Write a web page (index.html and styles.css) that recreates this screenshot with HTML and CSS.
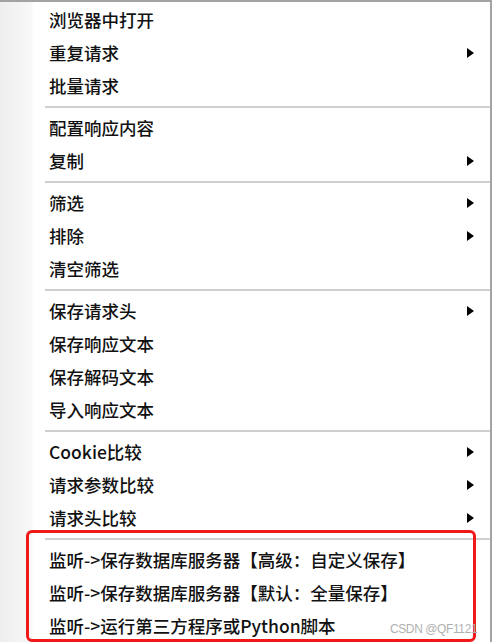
FILE: index.html
```html
<!DOCTYPE html>
<html lang="zh-CN">
<head>
<meta charset="utf-8">
<title>Context menu</title>
<link rel="stylesheet" href="styles.css">
</head>
<body>
<div class="menu">
  <div class="item"><span>浏览器中打开</span></div>
  <div class="item"><span>重复请求</span><i class="arrow"></i></div>
  <div class="item"><span>批量请求</span></div>
  <div class="sep"></div>
  <div class="item"><span>配置响应内容</span></div>
  <div class="item"><span>复制</span><i class="arrow"></i></div>
  <div class="sep"></div>
  <div class="item"><span>筛选</span><i class="arrow"></i></div>
  <div class="item"><span>排除</span><i class="arrow"></i></div>
  <div class="item"><span>清空筛选</span></div>
  <div class="sep"></div>
  <div class="item"><span>保存请求头</span><i class="arrow"></i></div>
  <div class="item"><span>保存响应文本</span></div>
  <div class="item"><span>保存解码文本</span></div>
  <div class="item"><span>导入响应文本</span></div>
  <div class="sep"></div>
  <div class="item"><span>Cookie比较</span><i class="arrow"></i></div>
  <div class="item"><span>请求参数比较</span><i class="arrow"></i></div>
  <div class="item"><span>请求头比较</span><i class="arrow"></i></div>
  <div class="sep"></div>
  <div class="item"><span>监听-&gt;保存数据库服务器【高级：自定义保存】</span></div>
  <div class="item"><span>监听-&gt;保存数据库服务器【默认：全量保存】</span></div>
  <div class="item"><span>监听-&gt;运行第三方程序或Python脚本</span></div>
  <div class="highlight"></div>
  <div class="watermark">CSDN @QF1121</div>
</div>
</body>
</html>
```
FILE: styles.css
```css
html, body {
  margin: 0;
  padding: 0;
  background: #ffffff;
}
body {
  width: 492px;
  height: 642px;
  overflow: hidden;
}
.menu {
  position: relative;
  box-sizing: border-box;
  width: 492px;
  height: 642px;
  border-top: 2px solid #a3a3a3;
  border-right: 2px solid #a3a3a3;
  padding-top: 1px;
  background: linear-gradient(to right, #eeeeee 0px, #f8f8f8 32px, #ffffff 33px);
  font-family: "Noto Sans CJK SC", "Microsoft YaHei", sans-serif;
  font-size: 17.5px;
  font-weight: 500;
  color: #111111;
}
.item {
  height: 33px;
  display: flex;
  align-items: center;
  justify-content: space-between;
  padding-left: 49px;
  padding-right: 16px;
  line-height: 1;
}
.item span {
  white-space: nowrap;
}
.arrow {
  width: 0;
  height: 0;
  border-left: 7px solid #000000;
  border-top: 5px solid transparent;
  border-bottom: 5px solid transparent;
}
.sep {
  height: 9px;
  margin-left: 45px;
  display: flex;
  align-items: center;
}
.sep::before {
  content: "";
  flex: 1;
  height: 2px;
  background: #cfcfcf;
}
.highlight {
  position: absolute;
  left: 26px;
  top: 528px;
  width: 450px;
  height: 112px;
  box-sizing: border-box;
  border: 3px solid #f01818;
  border-radius: 6px;
  pointer-events: none;
}
.watermark {
  position: absolute;
  left: 390px;
  top: 620px;
  font-family: "Liberation Sans", Arial, sans-serif;
  font-size: 12px;
  font-weight: 400;
  letter-spacing: -0.4px;
  color: #b0b0b0;
  white-space: nowrap;
}
```
